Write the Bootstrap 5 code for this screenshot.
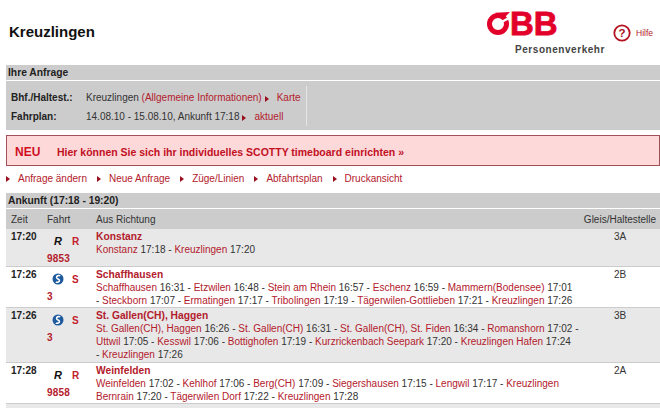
<!DOCTYPE html>
<html lang="de">
<head>
<meta charset="utf-8">
<title>Kreuzlingen</title>
<link href="https://cdn.jsdelivr.net/npm/bootstrap@5.3.0/dist/css/bootstrap.min.css" rel="stylesheet">
<style>
html,body{overflow:hidden;height:408px}
body{font-family:"Liberation Sans",Arial,sans-serif;font-size:10px;line-height:13px;color:#333;background:#fff}
a{color:#b3202c;text-decoration:none}
.page-head{height:65px;padding-left:9px}
.page-title{font-size:15px;line-height:18px;font-weight:700;color:#111;margin:23px 0 0}
.head-right{width:173px;position:relative}
.logo-mark{display:flex;align-items:center;height:23px;margin-top:12px;color:#e2002a;font-weight:700;font-size:33px;line-height:23px;-webkit-text-stroke:.8px #e2002a}
.logo-sub{margin:9px 0 0 28px;font-size:10px;line-height:12px;font-weight:700;color:#444;letter-spacing:.55px;white-space:nowrap}
.help-link{position:absolute;left:126px;top:24px;display:flex;align-items:center;gap:5px;font-size:8.5px;line-height:18px}
.main{margin-left:6px}
.bar{background:#ccc;font-weight:700;color:#222;height:15px;line-height:15px;padding-left:2px;font-size:10.3px}
.query{background:#ccc;margin-top:1px;height:49px;padding:5px 0 4px 5px;display:flex}
.query-inner{width:296px;border-right:1px solid #e6e6e6;height:40px;padding-top:5px}
.q-row{display:flex;height:19px;line-height:13px}
.q-label{width:75px;font-weight:700;color:#222}
.tri{display:inline-block;width:0;height:0;border-left:4px solid #9a0f1c;border-top:3.5px solid transparent;border-bottom:3.5px solid transparent;margin:0 8px 0 3px;vertical-align:-.5px}
.notice{margin-top:5px;height:31px;background:#fdd9da;border:1px solid #a05058;display:flex;align-items:center;padding:3px 0 0 8px;color:#c2101f;font-weight:700;font-size:10.5px}
.notice-tag{font-size:12px;width:42px;color:#d0101f}
.actions{height:27px;display:flex;align-items:center;padding-bottom:3px}
.actions a{margin-right:10px}
.actions .tri{margin:0 8px 0 0}
.conn{width:654px;table-layout:fixed;border-collapse:collapse}
.conn td,.conn th{padding:0;vertical-align:top}
.conn thead th{background:#ccc;font-weight:400;height:20px;line-height:19px;padding-top:1px;color:#333;border-top:1px solid #fff}
.c-time{width:41px;padding-left:5px!important;font-weight:700;color:#222}
.c-train{width:49px}
.c-dest{width:484px}
.c-track{width:80px;text-align:center}
.conn thead .c-time{font-weight:400}
.conn tbody td{padding-top:1px}
.conn tbody tr{border-bottom:1px solid #ccc}
.conn tbody tr:nth-child(3) td{padding-bottom:1px}
.row-shade td{background:#e8e8e8}
.dest-name{font-weight:700;font-size:10.25px;color:#b3202c;display:block}
.train-top{display:flex;align-items:center;height:16px;margin-top:3px;font-weight:700}
.train-ico{width:22px;display:flex;justify-content:center}
.train-r{font-style:italic;font-weight:700;color:#111;font-size:11px}
.train-num{display:block;font-weight:700;color:#b3202c;margin-top:2.5px;padding-bottom:1.5px;letter-spacing:.2px}
.train-type{color:#c2202c;margin-left:3px}
.cut-row{height:5px;background:#e8e8e8}
</style>
</head>
<body>
<header class="page-head d-flex justify-content-between">
  <h1 class="page-title">Kreuzlingen</h1>
  <div class="head-right">
    <div class="logo-mark">
      <svg width="23" height="23" viewBox="0 0 23 23" aria-hidden="true"><circle cx="11" cy="12" r="8.500" fill="none" stroke="#e2002a" stroke-width="5"/><path d="M8 .8 23 0 17.500 5.500 12 4z" fill="#e2002a"/><path d="M11 12 21 6.500" stroke="#fff" stroke-width="2.400" fill="none"/></svg><span>BB</span>
    </div>
    <div class="logo-sub">Personenverkehr</div>
    <a class="help-link" href="#"><svg width="18" height="18" viewBox="0 0 18 18" aria-hidden="true"><circle cx="9" cy="9" r="7.700" fill="#fff" stroke="#b3111f" stroke-width="1.800"/><text x="9" y="13" text-anchor="middle" font-family="Liberation Sans" font-weight="700" font-size="11.500" fill="#a5101c">?</text></svg>Hilfe</a>
  </div>
</header>
<main class="main">
  <div class="bar">Ihre Anfrage</div>
  <section class="query">
    <div class="query-inner">
      <div class="q-row"><div class="q-label">Bhf./Haltest.:</div><div>Kreuzlingen <a href="#">(Allgemeine Informationen)</a><span class="tri"></span><a href="#">Karte</a></div></div>
      <div class="q-row"><div class="q-label">Fahrplan:</div><div>14.08.10 - 15.08.10, Ankunft 17:18<span class="tri"></span><a href="#">aktuell</a></div></div>
    </div>
  </section>
  <div class="notice"><span class="notice-tag">NEU</span><span>Hier können Sie sich ihr individuelles SCOTTY timeboard einrichten »</span></div>
  <nav class="actions">
    <a href="#"><span class="tri"></span>Anfrage ändern</a>
    <a href="#"><span class="tri"></span>Neue Anfrage</a>
    <a href="#"><span class="tri"></span>Züge/Linien</a>
    <a href="#"><span class="tri"></span>Abfahrtsplan</a>
    <a href="#"><span class="tri"></span>Druckansicht</a>
  </nav>
  <div class="bar">Ankunft (17:18 - 19:20)</div>
  <table class="conn">
    <thead><tr><th class="c-time">Zeit</th><th class="c-train">Fahrt</th><th class="c-dest">Aus Richtung</th><th class="c-track">Gleis/Haltestelle</th></tr></thead>
    <tbody>
      <tr class="row-shade"><td class="c-time">17:20</td><td class="c-train"><div class="train-top"><span class="train-ico"><span class="train-r">R</span></span><span class="train-type">R</span></div><a class="train-num" href="#">9853</a></td><td class="c-dest"><a class="dest-name" href="#">Konstanz</a><a href="#">Konstanz</a> 17:18 - <a href="#">Kreuzlingen</a> 17:20</td><td class="c-track">3A</td></tr>
      <tr><td class="c-time">17:26</td><td class="c-train"><div class="train-top"><span class="train-ico"><svg width="12" height="12" viewBox="0 0 12 12" aria-hidden="true"><circle cx="6" cy="6" r="5.500" fill="#1d5a9e"/><path d="M8.200 2.800C6.500 2 4.300 3 4.600 4.600 4.900 6 7.300 6 7.500 7.500 7.600 8.800 5.500 9.700 3.800 9.200" fill="none" stroke="#fff" stroke-width="1.500"/></svg></span><span class="train-type">S</span></div><a class="train-num" href="#">3</a></td><td class="c-dest"><a class="dest-name" href="#">Schaffhausen</a><a href="#">Schaffhausen</a> 16:31 - <a href="#">Etzwilen</a> 16:48 - <a href="#">Stein am Rhein</a> 16:57 - <a href="#">Eschenz</a> 16:59 - <a href="#">Mammern(Bodensee)</a> 17:01<br>- <a href="#">Steckborn</a> 17:07 - <a href="#">Ermatingen</a> 17:17 - <a href="#">Tribolingen</a> 17:19 - <a href="#">Tägerwilen-Gottlieben</a> 17:21 - <a href="#">Kreuzlingen</a> 17:26</td><td class="c-track">2B</td></tr>
      <tr class="row-shade"><td class="c-time">17:26</td><td class="c-train"><div class="train-top"><span class="train-ico"><svg width="12" height="12" viewBox="0 0 12 12" aria-hidden="true"><circle cx="6" cy="6" r="5.500" fill="#1d5a9e"/><path d="M8.200 2.800C6.500 2 4.300 3 4.600 4.600 4.900 6 7.300 6 7.500 7.500 7.600 8.800 5.500 9.700 3.800 9.200" fill="none" stroke="#fff" stroke-width="1.500"/></svg></span><span class="train-type">S</span></div><a class="train-num" href="#">3</a></td><td class="c-dest"><a class="dest-name" href="#">St. Gallen(CH), Haggen</a><a href="#">St. Gallen(CH), Haggen</a> 16:26 - <a href="#">St. Gallen(CH)</a> 16:31 - <a href="#">St. Gallen(CH), St. Fiden</a> 16:34 - <a href="#">Romanshorn</a> 17:02 -<br><a href="#">Uttwil</a> 17:05 - <a href="#">Kesswil</a> 17:06 - <a href="#">Bottighofen</a> 17:19 - <a href="#">Kurzrickenbach Seepark</a> 17:20 - <a href="#">Kreuzlingen Hafen</a> 17:24<br>- <a href="#">Kreuzlingen</a> 17:26</td><td class="c-track">3B</td></tr>
      <tr><td class="c-time">17:28</td><td class="c-train"><div class="train-top"><span class="train-ico"><span class="train-r">R</span></span><span class="train-type">R</span></div><a class="train-num" href="#">9858</a></td><td class="c-dest"><a class="dest-name" href="#">Weinfelden</a><a href="#">Weinfelden</a> 17:02 - <a href="#">Kehlhof</a> 17:06 - <a href="#">Berg(CH)</a> 17:09 - <a href="#">Siegershausen</a> 17:15 - <a href="#">Lengwil</a> 17:17 - <a href="#">Kreuzlingen</a><br><a href="#">Bernrain</a> 17:20 - <a href="#">Tägerwilen Dorf</a> 17:22 - <a href="#">Kreuzlingen</a> 17:28</td><td class="c-track">2A</td></tr>
    </tbody>
  </table>
  <div class="cut-row"></div>
</main>
</body>
</html>
